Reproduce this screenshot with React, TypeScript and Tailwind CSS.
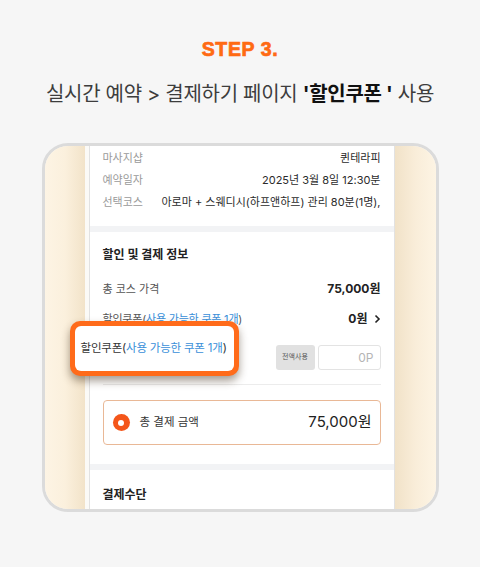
const KR = 'font-["Inter","Noto_Sans_CJK_KR",sans-serif]';

function InfoRow({ label, value }: { label: string; value: string }) {
  return (
    <div className="flex h-[22px] items-center justify-between text-[11px]">
      <span className="text-[#9a9a9a]">{label}</span>
      <span className="text-[#2b2b2b]">{value}</span>
    </div>
  );
}

function Screen() {
  return (
    <div className="flex w-[306px] flex-col border-x border-[#e2e2e2] bg-white">
      <div className="px-[13px] pt-[1px] pb-[13px]">
        <InfoRow label="마사지샵" value="퀸테라피" />
        <InfoRow label="예약일자" value="2025년 3월 8일 12:30분" />
        <InfoRow label="선택코스" value="아로마 + 스웨디시(하프앤하프) 관리 80분(1명)," />
      </div>
      <div className="h-[6px] bg-[#f2f3f5]" />

      <div className="px-[13px] pt-[14px]">
        <h2 className="h-[18px] text-[12px] leading-[18px] font-bold text-[#222]">
          할인 및 결제 정보
        </h2>
        <div className="mt-[16px] flex h-[18px] items-center justify-between text-[11px]">
          <span className="text-[#555]">총 코스 가격</span>
          <span className="text-[12px] font-bold text-[#222]">75,000원</span>
        </div>
        <div className="mt-[12px] flex h-[18px] items-center justify-between text-[11px]">
          <span className="tracking-[-0.2px] text-[#555]">
            할인쿠폰(<span className="text-[#3a8fd9]">사용 가능한 쿠폰 1개</span>)
          </span>
          <span className="flex items-center gap-[6px] text-[12px] font-bold text-[#222]">
            0원
            <svg width="7" height="10" viewBox="0 0 7 10" fill="none">
              <path d="M1.5 1.5L5 5L1.5 8.5" stroke="#222" strokeWidth="1.6" />
            </svg>
          </span>
        </div>
        <div className="mt-[17px] flex h-[25px] items-center justify-end gap-[3px]">
          <button
            className="flex h-[25px] w-[39px] items-center justify-center rounded-[3px] bg-[#e1e1e1] text-[7px] text-[#555]"
            type="button"
          >
            전액사용
          </button>
          <div className="flex h-[25px] w-[63px] items-center justify-end rounded-[3px] border border-[#e3e3e3] pr-[6px] text-[12px] text-[#b5b5b5]">
            0P
          </div>
        </div>
        <div className="mt-[14px] h-px bg-[#ececec]" />
        <div className="mt-[15px] flex h-[45px] items-center justify-between rounded-[4px] border border-[#e9b896] pr-[8px] pl-[9px]">
          <div className="flex items-center gap-[10px]">
            <span className="flex h-[17px] w-[17px] items-center justify-center rounded-full bg-[#f4561a]">
              <span className="h-[6px] w-[6px] rounded-full bg-white" />
            </span>
            <span className="text-[11.5px] text-[#333]">총 결제 금액</span>
          </div>
          <span className="text-[15px] text-[#222]">75,000원</span>
        </div>
      </div>

      <div className="mt-[19px] h-[6px] bg-[#f2f3f5]" />
      <div className="px-[13px] pt-[16px]">
        <h2 className="text-[12px] leading-[18px] font-bold text-[#222]">결제수단</h2>
      </div>
    </div>
  );
}

export default function App() {
  return (
    <div className={`flex h-[567px] w-[480px] flex-col items-center bg-[#f6f6f6] ${KR}`}>
      <p className='mt-[37px] font-["Liberation_Sans",sans-serif] text-[19.5px] leading-[24px] font-black tracking-[0.6px] text-[#ff6a13] [-webkit-text-stroke:0.7px_#ff6a13]'>
        STEP 3.
      </p>
      <h1 className="mt-[19px] text-[20px] leading-[28px] tracking-[-0.3px] text-[#3d3d3d]">
        실시간 예약 &gt; 결제하기 페이지 <span className="font-bold text-[#111]">'할인쿠폰 '</span> 사용
      </h1>

      <div className="relative mt-[35px] h-[369px] w-[397px]">
        <div className="flex h-full w-full overflow-hidden rounded-[26px] border-[3px] border-[#dbdbdb]">
          <div className="w-[40px] bg-gradient-to-r from-[#fdf4e4] via-[#fbf0dd] to-[#f2e3c9]" />
          <div className="w-[4px] bg-[#fbfaf7]" />
          <Screen />
          <div className="flex-1 bg-gradient-to-r from-[#f1e2c8] via-[#f9edd9] to-[#fdf4e4]" />
        </div>

        <div className="absolute top-[178px] left-[28px] flex h-[55px] w-[169px] items-center rounded-[10px] bg-[#ff6b1a] p-[5px] shadow-[0_5px_9px_rgba(60,40,20,0.45)]">
          <div className="flex h-full w-full items-center rounded-[6px] bg-white pl-[6px] text-[11.5px] tracking-[-0.2px] text-[#333]">
            <span className="whitespace-nowrap">
              할인쿠폰(<span className="text-[#3a8fd9]">사용 가능한 쿠폰 1개</span>)
            </span>
          </div>
        </div>
      </div>
    </div>
  );
}
